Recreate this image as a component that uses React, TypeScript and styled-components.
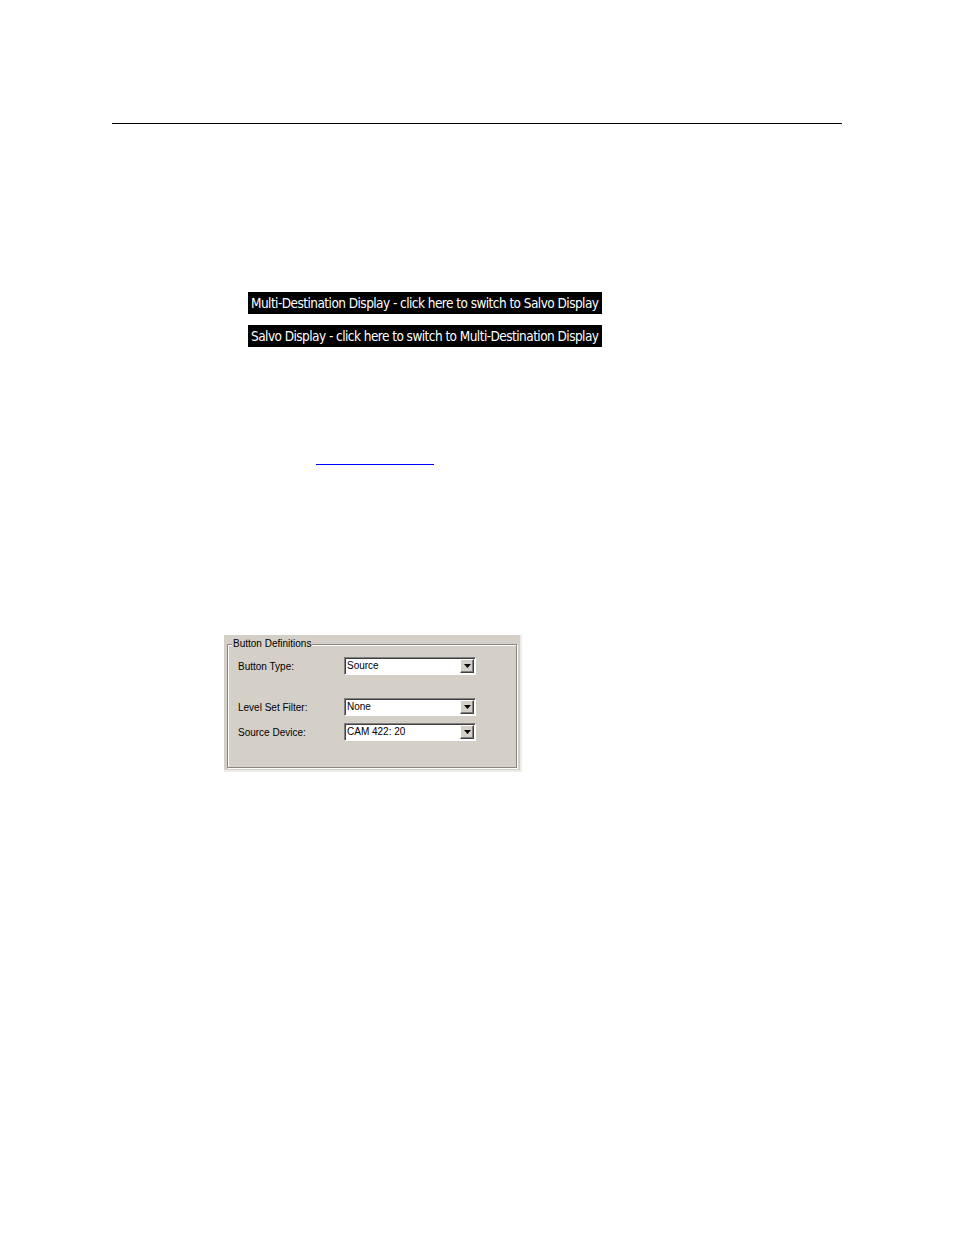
import styled, { createGlobalStyle } from "styled-components";

const GlobalStyle = createGlobalStyle`
  html, body {
    margin: 0;
    padding: 0;
    background: #ffffff;
  }
  body {
    font-family: "Liberation Sans", Arial, sans-serif;
  }
`;

const fields = [
  { label: "Button Type:", value: "Source", top: 0 },
  { label: "Level Set Filter:", value: "None", top: 23 },
  { label: "Source Device:", value: "CAM 422: 20", top: 7 },
];

export default function App() {
  return (
    <>
      <GlobalStyle />
      <SPage>
        <SRule />
        <SBars>
          <SBar>Multi-Destination Display - click here to switch to Salvo Display</SBar>
          <SBar>Salvo Display - click here to switch to Multi-Destination Display</SBar>
        </SBars>
        <SLinkLine>
          <SLink href="#" />
        </SLinkLine>
        <SDialog>
          <SGroup>
            <SLegend>Button Definitions</SLegend>
            {fields.map((f) => (
              <SFieldRow key={f.label} $top={f.top}>
                <SLabel>{f.label}</SLabel>
                <SCombo>
                  <SComboText>{f.value}</SComboText>
                  <SComboButton>
                    <svg width="7" height="4" viewBox="0 0 7 4">
                      <path d="M0 0h7L3.5 4z" fill="#000" />
                    </svg>
                  </SComboButton>
                </SCombo>
              </SFieldRow>
            ))}
          </SGroup>
        </SDialog>
      </SPage>
    </>
  );
}

const SPage = styled.div`
  width: 954px;
  min-height: 1235px;
  padding-top: 123px;
  box-sizing: border-box;
`;

const SRule = styled.div`
  margin-left: 112px;
  width: 730px;
  height: 1px;
  background: #000000;
`;

const SBars = styled.div`
  margin-top: 168px;
  margin-left: 248px;
  display: flex;
  flex-direction: column;
  align-items: flex-start;
  gap: 11px;
`;

const SBar = styled.div`
  background: #000000;
  color: #ffffff;
  height: 22px;
  line-height: 23px;
  width: 354px;
  box-sizing: border-box;
  padding-left: 3px;
  font-family: "Liberation Sans Narrow", "DejaVu Sans Condensed", sans-serif;
  font-size: 13.5px;
  letter-spacing: -0.55px;
  white-space: nowrap;
  overflow: hidden;
`;

const SLinkLine = styled.div`
  margin-top: 104px;
  margin-left: 316px;
  height: 14px;
`;

const SLink = styled.a`
  display: block;
  width: 118px;
  height: 13px;
  border-bottom: 1px solid #0000ff;
`;

const SDialog = styled.div`
  margin-top: 170px;
  margin-left: 224px;
  width: 298px;
  height: 137px;
  box-sizing: border-box;
  background: #d4d0c8;
  border-right: 2px solid #eeece8;
  border-bottom: 2px solid #eeece8;
  padding: 3px 3px 3px 3px;
`;

const SGroup = styled.fieldset`
  margin: 0;
  height: 130px;
  box-sizing: border-box;
  border: 1px solid #8a8780;
  box-shadow: 1px 1px 0 #ffffff, inset 1px 1px 0 #ffffff;
  padding: 7px 0 0 10px;
  font-family: "Liberation Sans", Arial, sans-serif;
  font-size: 10px;
  color: #000000;
`;

const SLegend = styled.legend`
  padding: 0 1px;
  margin-left: -6px;
  background: #d4d0c8;
  font-size: 10px;
  line-height: 12px;
`;

const SFieldRow = styled.div<{ $top: number }>`
  display: grid;
  grid-template-columns: 106px 132px;
  align-items: center;
  margin-top: ${(p) => p.$top}px;
`;

const SLabel = styled.span`
  white-space: nowrap;
`;

const SCombo = styled.div`
  width: 132px;
  height: 18px;
  box-sizing: border-box;
  display: flex;
  align-items: center;
  background: #ffffff;
  border-top: 1px solid #808080;
  border-left: 1px solid #808080;
  border-right: 1px solid #ffffff;
  border-bottom: 1px solid #ffffff;
  box-shadow: inset 1px 1px 0 #404040;
  padding: 0 1px 0 2px;
`;

const SComboText = styled.span`
  flex: 1;
  font-size: 10px;
  line-height: 14px;
`;

const SComboButton = styled.div`
  width: 14px;
  height: 14px;
  box-sizing: border-box;
  background: #d4d0c8;
  border-top: 1px solid #ffffff;
  border-left: 1px solid #ffffff;
  border-right: 1px solid #404040;
  border-bottom: 1px solid #404040;
  box-shadow: inset -1px -1px 0 #808080;
  display: flex;
  align-items: center;
  justify-content: center;
`;
